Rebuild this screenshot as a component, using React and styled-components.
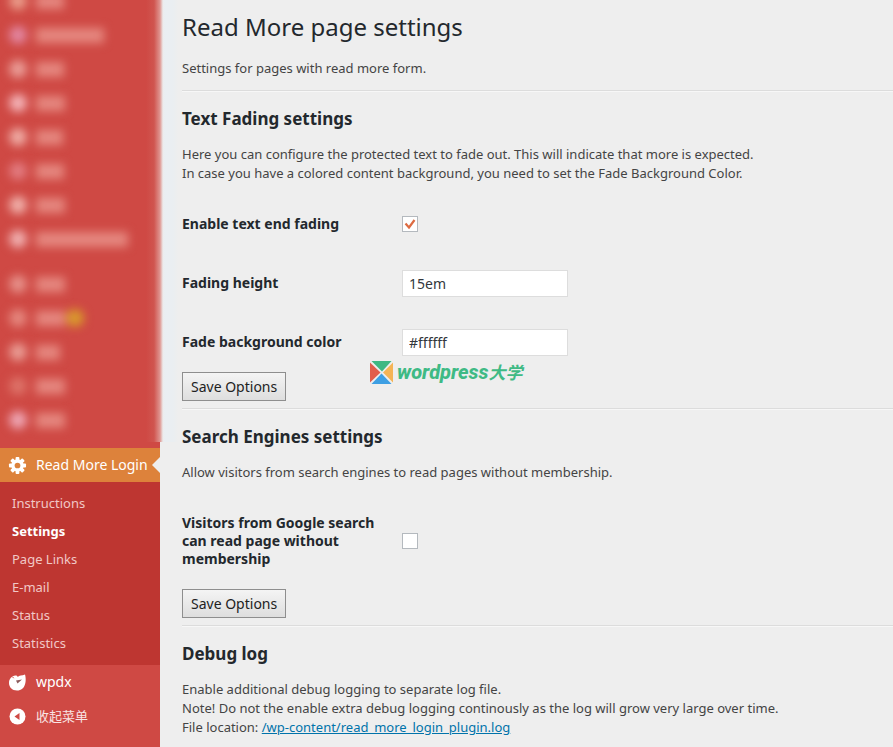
import React from "react";
import styled, { createGlobalStyle } from "styled-components";

const GlobalStyle = createGlobalStyle`
  * {
    box-sizing: border-box;
  }
  body {
    margin: 0;
    background: #eeeeee;
    color: #444;
    font-family: "Noto Sans", "Open Sans", "Noto Sans CJK SC", sans-serif;
    font-size: 13px;
    line-height: 19px;
  }
`;

const Page = styled.div`
  display: flex;
  height: 100vh;
  overflow: hidden;
`;

const Sidebar = styled.nav`
  flex: 0 0 160px;
  background: #cf4944;
`;

// the private part of the menu, scrolled half a row up
const HiddenMenu = styled.div`
  position: relative;
  margin-top: -16px;
  padding-bottom: 11px;

  &::after {
    content: "";
    position: absolute;
    top: 0;
    bottom: 6px;
    left: 146px;
    width: 32px;
    background: linear-gradient(
      to right,
      rgba(207, 73, 68, 0) 0,
      #d0554f 8px,
      #df9691 14px,
      #ececed 17px,
      #eaeef2 19px,
      #eaeef1 27px,
      #eeeeee 32px
    );
  }
`;

const HiddenRow = styled.div`
  display: flex;
  align-items: center;
  gap: 9px;
  height: 34px;
  padding-left: 9px;
  margin-bottom: ${(p) => (p.$last ? "11px" : "0")};
  filter: blur(5px);
`;

const HiddenIcon = styled.span`
  width: 18px;
  height: 18px;
  border-radius: 9px;
  background: ${(p) => p.$color};
`;

const HiddenText = styled.span`
  width: ${(p) => p.$width}px;
  height: 15px;
  background: #e5877f;
`;

const HiddenBadge = styled.span`
  width: 18px;
  height: 18px;
  margin-left: -8px;
  border-radius: 9px;
  background: #d99a2c;
`;

const MenuLink = styled.a`
  position: relative;
  display: flex;
  align-items: center;
  gap: 9px;
  height: 34px;
  padding-left: 8px;
  color: #fff;
  background: ${(p) => (p.$active ? "#dd823b" : "transparent")};
  font-size: 14px;
  line-height: 18px;
  text-decoration: none;
  white-space: nowrap;

  svg {
    flex: none;
  }

  &::after {
    content: "";
    display: ${(p) => (p.$active ? "block" : "none")};
    position: absolute;
    top: 9px;
    right: 0;
    border: 8px solid transparent;
    border-right-color: #eeeeee;
    border-left-width: 0;
  }
`;

const CollapseButton = styled.button`
  display: flex;
  align-items: center;
  gap: 9px;
  width: 100%;
  height: 34px;
  padding: 0 0 0 8px;
  border: 0;
  background: none;
  color: #f9e4e3;
  font: inherit;
`;

const SubMenu = styled.ul`
  margin: 0;
  padding: 7px 0 8px;
  list-style: none;
  background: #be3631;
`;

const SubLink = styled.a`
  display: block;
  padding: 5px 12px;
  color: ${(p) => (p.$current ? "#fff" : "#f1c8c6")};
  font-weight: ${(p) => (p.$current ? 700 : 400)};
  line-height: 18px;
  text-decoration: none;
`;

const Main = styled.main`
  flex: 1;
  padding: 12px 0 0 22px;
`;

const Title = styled.h1`
  margin: 0 0 17px;
  color: #23282d;
  font-size: 24px;
  font-weight: 400;
  line-height: 30px;
`;

const Text = styled.p`
  margin: 0;
`;

const Section = styled.section`
  margin-top: ${(p) => (p.$tight ? "7px" : "12px")};
  padding-top: 16px;
  border-top: 1px solid #dcdcdc;
  box-shadow: inset 0 1px #f7f7f7;
`;

const Heading = styled.h2`
  margin: 0 0 14px;
  color: #23282d;
  font-size: 17px;
  font-weight: 700;
  line-height: 24px;
`;

const Form = styled.form`
  position: relative;
`;

const Fields = styled.div`
  display: grid;
  gap: 25px;
  padding: 24px 0 13px;
`;

const Field = styled.div`
  display: grid;
  grid-template-columns: 200px 1fr;
  gap: 20px;
  align-items: center;
`;

const Label = styled.label`
  padding: 8px 0;
  color: #23282d;
  font-size: 14px;
  font-weight: 700;
  line-height: 18px;
`;

const TextBox = styled.input`
  width: 166px;
  height: 27px;
  padding: 0 6px;
  border: 1px solid #ddd;
  background: #fff;
  color: #32373c;
  font: inherit;
  font-size: 14px;
`;

const CheckWrap = styled.span`
  display: inline-grid;
  width: 16px;

  input,
  svg {
    grid-area: 1 / 1;
  }

  svg {
    pointer-events: none;
  }
`;

const CheckBox = styled.input`
  appearance: none;
  width: 16px;
  height: 16px;
  margin: 0;
  border: 1px solid #b4b9be;
  background: #fff;

  & + svg {
    visibility: hidden;
  }
  &:checked + svg {
    visibility: visible;
  }
`;

const SaveButton = styled.button`
  display: block;
  height: 29px;
  padding: 0 8px;
  border: 1px solid #8e8e8e;
  background: linear-gradient(#f4f4f4, #dedede);
  color: #222;
  font: inherit;
  font-size: 14px;
`;

const FileLink = styled.a`
  color: #0073aa;
`;

const Watermark = styled.div`
  position: absolute;
  left: 188px;
  bottom: 14px;
  display: flex;
  align-items: center;
  gap: 4px;
  color: #3fba85;
  font-family: Roboto, "Noto Sans CJK SC", sans-serif;
  font-size: 20px;
  font-style: italic;
  font-weight: 800;
  line-height: 28px;
  white-space: nowrap;

  small {
    font-size: 17px;
    font-weight: 700;
  }
`;

const hiddenTop = [
  { color: "#ea9c8a", width: 28 },
  { color: "#e286a0", width: 68 },
  { color: "#ea9d97", width: 28 },
  { color: "#f4b4b8", width: 29 },
  { color: "#efaca5", width: 27 },
  { color: "#e27b80", width: 28 },
  { color: "#f0b0aa", width: 29 },
  { color: "#f0b0b0", width: 92 },
];

const hiddenBottom = [
  { color: "#e69089", width: 29 },
  { color: "#e5877e", width: 29, badge: true },
  { color: "#e99c94", width: 24 },
  { color: "#dd7268", width: 29 },
  { color: "#eea6b4", width: 29 },
];

const subItems = ["Instructions", "Settings", "Page Links", "E-mail", "Status", "Statistics"];

function GearIcon() {
  return (
    <svg width="19" height="19" viewBox="0 0 20 20" aria-hidden="true">
      <g fill="#fff">
        {[0, 45, 90, 135].map((a) => (
          <rect key={a} x="8" y="1" width="4" height="18" rx="1" transform={`rotate(${a} 10 10)`} />
        ))}
        <circle cx="10" cy="10" r="6.5" />
      </g>
      <circle cx="10" cy="10" r="3" fill="#dd823b" />
    </svg>
  );
}

function LeafIcon() {
  return (
    <svg width="19" height="19" viewBox="0 0 19 19" aria-hidden="true">
      <path
        d="M17 1.500C18.600 7 18 17.500 9 17.500 4 17.500 1 14 1 10 1 6 3.800 3 7.400 2.600 8.400 2.500 9.200 3 9.800 4 11 2.200 14 2.800 17 1.500z"
        fill="#fff"
      />
      <path d="M4.500 3.800l1.200 1.400" stroke="#cf4944" />
      <path d="M8 7.500l6-1-4.500 4z" fill="#8d5b5c" />
    </svg>
  );
}

function CollapseIcon() {
  return (
    <svg width="19" height="19" viewBox="0 0 19 19" aria-hidden="true">
      <circle cx="9.500" cy="9.500" r="8" fill="#fff" />
      <path d="M11.500 6v7L6.500 9.500z" fill="#cf4944" />
    </svg>
  );
}

function LogoIcon() {
  return (
    <svg width="23" height="23" viewBox="0 0 23 23" aria-hidden="true">
      <path d="M1.500 0h20L12 10.500z" fill="#3fb883" />
      <path d="M0 1.500L10.500 11.500 0 21.500z" fill="#e25d4b" />
      <path d="M23 1.500v20L13 11.500z" fill="#f5b455" />
      <path d="M11.500 12.500L21.500 23h-20z" fill="#3e9fe3" />
    </svg>
  );
}

function Check({ id, checked }) {
  return (
    <CheckWrap>
      <CheckBox id={id} type="checkbox" defaultChecked={checked} />
      <svg width="16" height="16" viewBox="0 0 16 16" aria-hidden="true">
        <path d="M3.500 7.500L7 11.500 12.500 4" fill="none" stroke="#dd6b42" strokeWidth="2.200" />
      </svg>
    </CheckWrap>
  );
}

function HiddenRows({ rows, gapAfter }) {
  return rows.map((r, i) => (
    <HiddenRow key={i} $last={gapAfter && i === rows.length - 1}>
      <HiddenIcon $color={r.color} />
      <HiddenText $width={r.width} />
      {r.badge && <HiddenBadge />}
    </HiddenRow>
  ));
}

export default function App() {
  const onSubmit = (e) => e.preventDefault();

  return (
    <Page>
      <GlobalStyle />
      <Sidebar>
        <HiddenMenu aria-hidden="true">
          <HiddenRows rows={hiddenTop} gapAfter />
          <HiddenRows rows={hiddenBottom} />
        </HiddenMenu>
        <MenuLink href="#login" $active>
          <GearIcon />
          Read More Login
        </MenuLink>
        <SubMenu>
          {subItems.map((item) => (
            <li key={item}>
              <SubLink href="#item" $current={item === "Settings"}>
                {item}
              </SubLink>
            </li>
          ))}
        </SubMenu>
        <MenuLink href="#wpdx">
          <LeafIcon />
          wpdx
        </MenuLink>
        <CollapseButton type="button">
          <CollapseIcon />
          收起菜单
        </CollapseButton>
      </Sidebar>

      <Main>
        <Title>Read More page settings</Title>
        <Text>Settings for pages with read more form.</Text>

        <Section>
          <Heading>Text Fading settings</Heading>
          <Text>
            Here you can configure the protected text to fade out. This will indicate that more is expected.
            <br />
            In case you have a colored content background, you need to set the Fade Background Color.
          </Text>
          <Form onSubmit={onSubmit}>
            <Fields>
              <Field>
                <Label htmlFor="fading">Enable text end fading</Label>
                <Check id="fading" checked />
              </Field>
              <Field>
                <Label htmlFor="height">Fading height</Label>
                <TextBox id="height" type="text" defaultValue="15em" />
              </Field>
              <Field>
                <Label htmlFor="color">Fade background color</Label>
                <TextBox id="color" type="text" defaultValue="#ffffff" />
              </Field>
            </Fields>
            <SaveButton>Save Options</SaveButton>
            <Watermark>
              <LogoIcon />
              <span>
                wordpress<small>大学</small>
              </span>
            </Watermark>
          </Form>
        </Section>

        <Section $tight>
          <Heading>Search Engines settings</Heading>
          <Text>Allow visitors from search engines to read pages without membership.</Text>
          <Form onSubmit={onSubmit}>
            <Fields>
              <Field>
                <Label htmlFor="google">Visitors from Google search can read page without membership</Label>
                <Check id="google" />
              </Field>
            </Fields>
            <SaveButton>Save Options</SaveButton>
          </Form>
        </Section>

        <Section $tight>
          <Heading>Debug log</Heading>
          <Text>
            Enable additional debug logging to separate log file.
            <br />
            Note! Do not the enable extra debug logging continously as the log will grow very large over time.
            <br />
            File location: <FileLink href="#log">/wp-content/read_more_login_plugin.log</FileLink>
          </Text>
        </Section>
      </Main>
    </Page>
  );
}
